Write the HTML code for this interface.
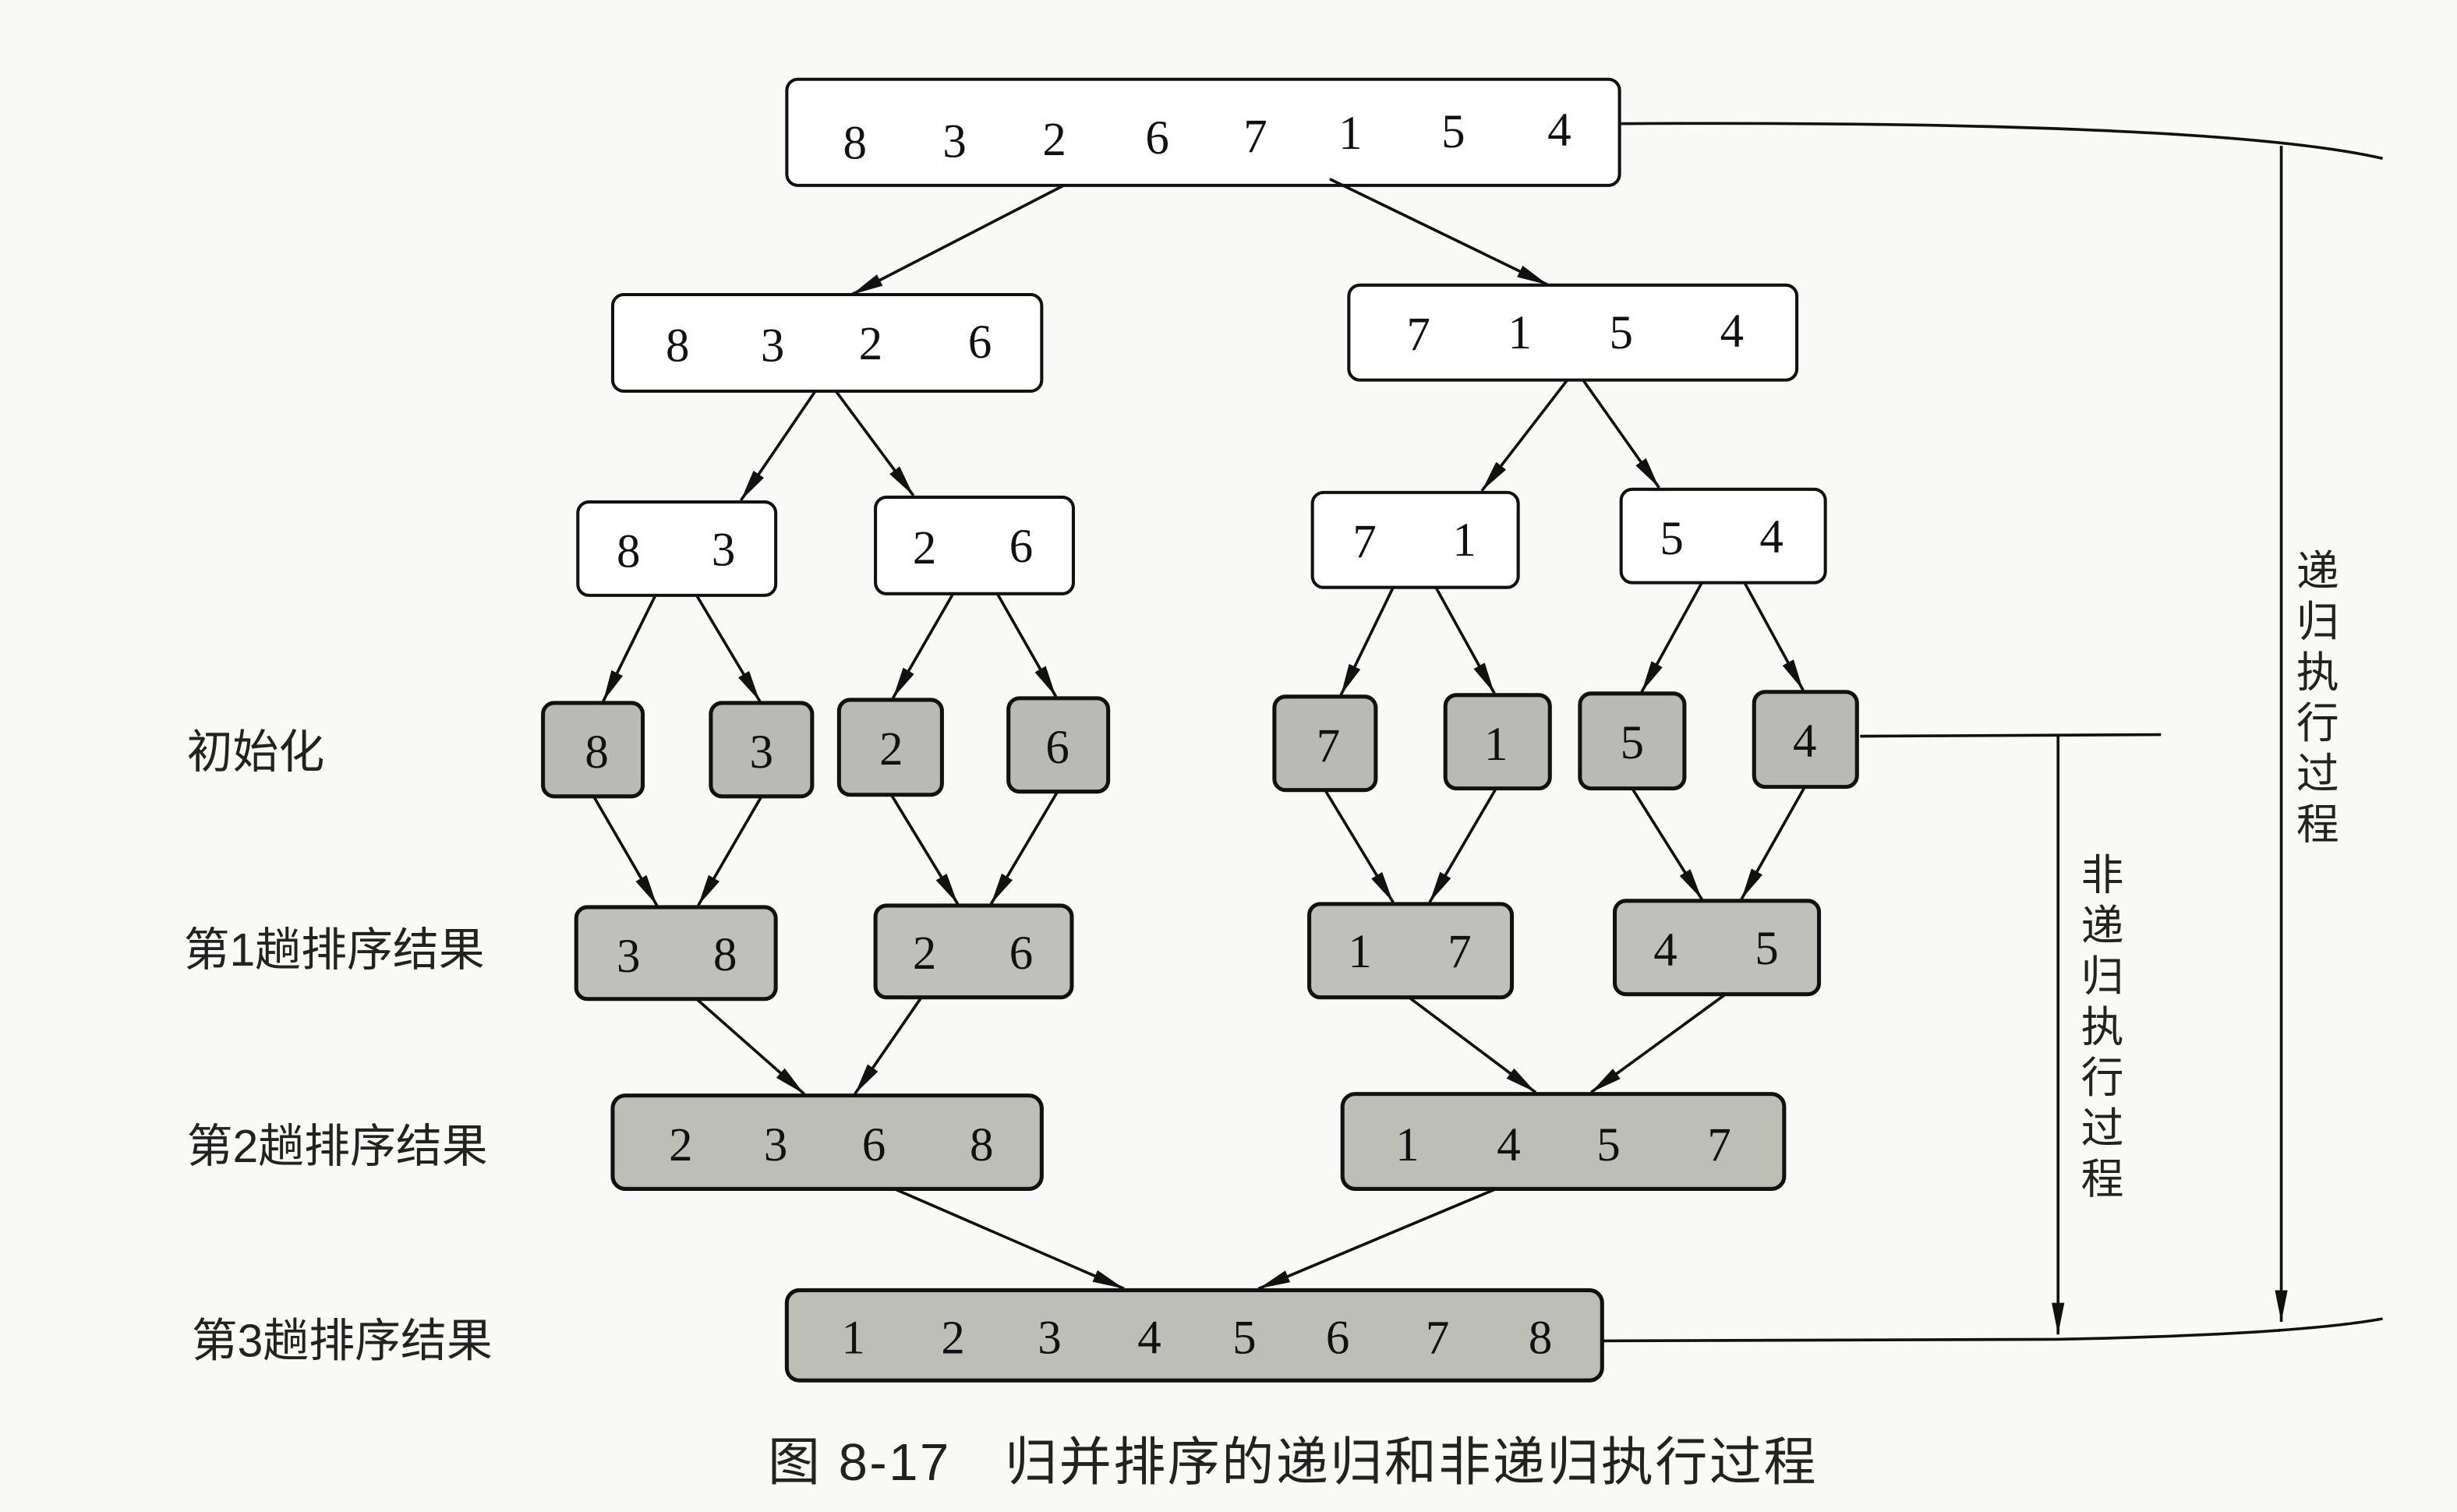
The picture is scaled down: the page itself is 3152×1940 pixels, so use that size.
<!DOCTYPE html>
<html><head><meta charset="utf-8"><style>
html,body{margin:0;padding:0;background:#f9f9f7;}
svg{display:block}
text{font-family:"Liberation Serif","Noto Serif CJK SC",serif;fill:#111}
.c{font-family:"Liberation Sans","Noto Sans CJK SC",sans-serif;fill:#222}
</style></head><body>
<svg width="3152" height="1940" viewBox="0 0 1552 955" xmlns="http://www.w3.org/2000/svg">
<defs>
<marker id="a" viewBox="0 0 20 10" refX="20" refY="5" markerWidth="20" markerHeight="10" markerUnits="userSpaceOnUse" orient="auto"><path d="M0,1 L20,5 L0,9 Z" fill="#111"/></marker>
</defs>
<rect width="1552" height="955" fill="#f9f9f7"/>
<g stroke="#111" stroke-width="2" stroke-linejoin="round">
<rect x="497" y="50" width="526" height="67" rx="7" fill="#fff"/>
<rect x="387" y="186" width="271" height="61" rx="7" fill="#fff"/>
<rect x="852" y="180" width="283" height="60" rx="7" fill="#fff"/>
<rect x="365" y="317" width="125" height="59" rx="7" fill="#fff"/>
<rect x="553" y="314" width="125" height="61" rx="7" fill="#fff"/>
<rect x="829" y="311" width="130" height="60" rx="7" fill="#fff"/>
<rect x="1024" y="309" width="129" height="59" rx="7" fill="#fff"/>
<g fill="#b9b9b7" stroke-width="2.5">
<rect x="343" y="444" width="63" height="59" rx="7"/>
<rect x="449" y="444" width="64" height="59" rx="7"/>
<rect x="530" y="442" width="65" height="60" rx="7"/>
<rect x="637" y="441" width="63" height="59" rx="7"/>
<rect x="805" y="440" width="64" height="59" rx="7"/>
<rect x="913" y="439" width="66" height="59" rx="7"/>
<rect x="998" y="438" width="66" height="60" rx="7"/>
<rect x="1108" y="437" width="65" height="60" rx="7"/>
</g>
<g fill="#bfbfbc" stroke-width="2.5">
<rect x="364" y="573" width="126" height="58" rx="7"/>
<rect x="553" y="572" width="124" height="58" rx="7"/>
<rect x="827" y="571" width="128" height="59" rx="7"/>
<rect x="1020" y="569" width="129" height="59" rx="7"/>
</g>
<g fill="#bdbeb6" stroke-width="2.5">
<rect x="387" y="692" width="271" height="59" rx="8"/>
<rect x="848" y="691" width="279" height="60" rx="8"/>
<rect x="497" y="815" width="515" height="57" rx="8"/>
</g>
</g>
<g stroke="#111" stroke-width="1.8" fill="none" marker-end="url(#a)">
<line x1="672" y1="117" x2="538" y2="186"/>
<line x1="840" y1="113" x2="978" y2="180"/>
<line x1="515" y1="247" x2="468" y2="316"/>
<line x1="528" y1="247" x2="577" y2="313"/>
<line x1="990" y1="240" x2="936" y2="310"/>
<line x1="1000" y1="240" x2="1048" y2="308"/>
<line x1="414" y1="376" x2="381" y2="443"/>
<line x1="440" y1="376" x2="480" y2="443"/>
<line x1="602" y1="375" x2="564" y2="441"/>
<line x1="630" y1="375" x2="667" y2="440"/>
<line x1="880" y1="371" x2="847" y2="439"/>
<line x1="907" y1="371" x2="944" y2="438"/>
<line x1="1075" y1="368" x2="1037" y2="437"/>
<line x1="1102" y1="368" x2="1139" y2="436"/>
<line x1="375" y1="503" x2="415" y2="572"/>
<line x1="481" y1="503" x2="441" y2="572"/>
<line x1="563" y1="502" x2="605" y2="571"/>
<line x1="668" y1="500" x2="626" y2="571"/>
<line x1="837" y1="499" x2="880" y2="570"/>
<line x1="945" y1="498" x2="903" y2="570"/>
<line x1="1031" y1="498" x2="1075" y2="568"/>
<line x1="1140" y1="497" x2="1100" y2="568"/>
<line x1="440" y1="631" x2="508" y2="691"/>
<line x1="582" y1="630" x2="540" y2="691"/>
<line x1="890" y1="630" x2="970" y2="690"/>
<line x1="1090" y1="628" x2="1005" y2="690"/>
<line x1="565" y1="751" x2="710" y2="814"/>
<line x1="945" y1="751" x2="795" y2="814"/>
<line x1="1441" y1="92" x2="1441" y2="835"/>
<line x1="1300" y1="465" x2="1300" y2="843"/>
</g>
<g stroke="#111" stroke-width="1.8" fill="none">
<path d="M1023,78 Q1400,76 1505,100"/>
<path d="M1012,847 L1300,846 Q1450,843 1505,833"/>
<line x1="1175" y1="465" x2="1365" y2="464"/>
</g>
<g font-size="30" text-anchor="middle">
<text x="540" y="100">8</text><text x="603" y="99">3</text><text x="666" y="98">2</text><text x="731" y="97">6</text><text x="793" y="96">7</text><text x="853" y="94">1</text><text x="918" y="93">5</text><text x="985" y="92">4</text>
<text x="428" y="228">8</text><text x="488" y="228">3</text><text x="550" y="227">2</text><text x="619" y="226">6</text>
<text x="896" y="221">7</text><text x="960" y="220">1</text><text x="1024" y="220">5</text><text x="1094" y="219">4</text>
<text x="397" y="358">8</text><text x="457" y="357">3</text>
<text x="584" y="356">2</text><text x="645" y="355">6</text>
<text x="862" y="352">7</text><text x="925" y="351">1</text>
<text x="1056" y="350">5</text><text x="1119" y="349">4</text>
<text x="377" y="485">8</text><text x="481" y="485">3</text><text x="563" y="483">2</text><text x="668" y="482">6</text>
<text x="839" y="481">7</text><text x="945" y="480">1</text><text x="1031" y="479">5</text><text x="1140" y="478">4</text>
<text x="397" y="614">3</text><text x="458" y="613">8</text>
<text x="584" y="612">2</text><text x="645" y="612">6</text>
<text x="859" y="611">1</text><text x="922" y="611">7</text>
<text x="1052" y="610">4</text><text x="1116" y="609">5</text>
<text x="430" y="733">2</text><text x="490" y="733">3</text><text x="552" y="733">6</text><text x="620" y="733">8</text>
<text x="889" y="733">1</text><text x="953" y="733">4</text><text x="1016" y="733">5</text><text x="1086" y="733">7</text>
<text x="539" y="855">1</text><text x="602" y="855">2</text><text x="663" y="855">3</text><text x="726" y="855">4</text><text x="786" y="855">5</text><text x="845" y="855">6</text><text x="908" y="855">7</text><text x="973" y="855">8</text>
</g>
<g class="c" font-size="29">
<text class="c" x="118" y="485">初始化</text>
<text class="c" x="116" y="610">第1趟排序结果</text>
<text class="c" x="118" y="734">第2趟排序结果</text>
<text class="c" x="121" y="857">第3趟排序结果</text>
</g>
<g class="c" font-size="27" text-anchor="middle">
<text class="c" x="1464" y="370">递</text><text class="c" x="1464" y="402">归</text><text class="c" x="1464" y="434">执</text><text class="c" x="1464" y="466">行</text><text class="c" x="1464" y="498">过</text><text class="c" x="1464" y="530">程</text>
<text class="c" x="1328" y="562">非</text><text class="c" x="1328" y="594">递</text><text class="c" x="1328" y="626">归</text><text class="c" x="1328" y="658">执</text><text class="c" x="1328" y="690">行</text><text class="c" x="1328" y="722">过</text><text class="c" x="1328" y="754">程</text>
</g>
<text class="c" x="485" y="935" font-size="33" textLength="662" lengthAdjust="spacing">图 8-17　归并排序的递归和非递归执行过程</text>
</svg>
</body></html>
